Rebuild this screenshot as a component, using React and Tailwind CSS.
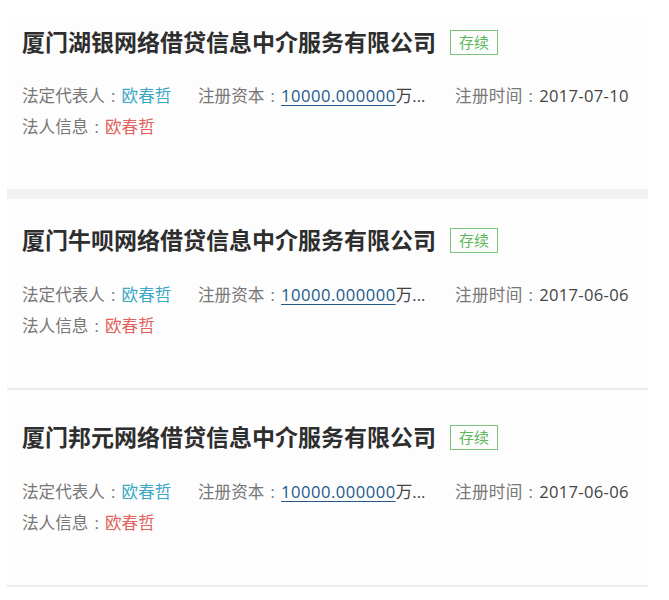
import React from 'react'

const companies = [
  { name: '厦门湖银网络借贷信息中介服务有限公司', date: '2017-07-10', pt: 'pt-[11px]', mt: 'mt-[23px]', sep: 'band' },
  { name: '厦门牛呗网络借贷信息中介服务有限公司', date: '2017-06-06', pt: 'pt-[26px]', mt: 'mt-[24px]', sep: 'line' },
  { name: '厦门邦元网络借贷信息中介服务有限公司', date: '2017-06-06', pt: 'pt-[32px]', mt: 'mt-[24px]', sep: 'line' },
]

const Colon = () => <span className="inline-block w-[1em] text-center">:</span>

const Card = ({ company }) => {
  return (
    <div>
      <div className={`pl-[15px] pb-[47px] ${company.pt}`}>
        {/* Title */}
        <div className="flex items-center h-[30px]">
          <h2 className="text-[23px] font-bold text-[#2e2e2e] leading-none">{company.name}</h2>
          <span className="ml-[14px] h-[25px] w-[48px] border border-[#7cc67c] text-[#5db85d] text-[15px] flex items-center justify-center">
            存续
          </span>
        </div>

        {/* Info rows */}
        <div className={`${company.mt} text-[16.6px] leading-[31px] text-[#777]`}>
          <div className="flex">
            <div className="w-[176px]">
              法定代表人<Colon /><span className="text-[#3aa8c6]">欧春哲</span>
            </div>
            <div className="w-[257px]">
              注册资本<Colon />
              <span className="text-[#22598a] underline underline-offset-[3px] tracking-[0.5px]">10000.000000</span>
              <span className="text-[#444]">万...</span>
            </div>
            <div className="tracking-[0.3px]">
              注册时间<Colon /><span className="text-[#444]">{company.date}</span>
            </div>
          </div>
          <div>
            法人信息<Colon /><span className="text-[#e0625a]">欧春哲</span>
          </div>
        </div>
      </div>
      {company.sep === 'band' ? (
        <div className="h-[10px] bg-[#f2f2f2]" />
      ) : (
        <div className="h-[2px] bg-[#ececec]" />
      )}
    </div>
  )
}

const App = () => {
  return (
    <div
      className="w-[669px] h-[600px] bg-white overflow-hidden"
      style={{ fontFamily: '"Open Sans", "Noto Sans CJK SC", sans-serif' }}
    >
      <div className="ml-[7px] mt-[16px] w-[641px] bg-[#fdfdfd]">
        {companies.map((c) => (
          <Card key={c.name} company={c} />
        ))}
      </div>
    </div>
  )
}

export default App
